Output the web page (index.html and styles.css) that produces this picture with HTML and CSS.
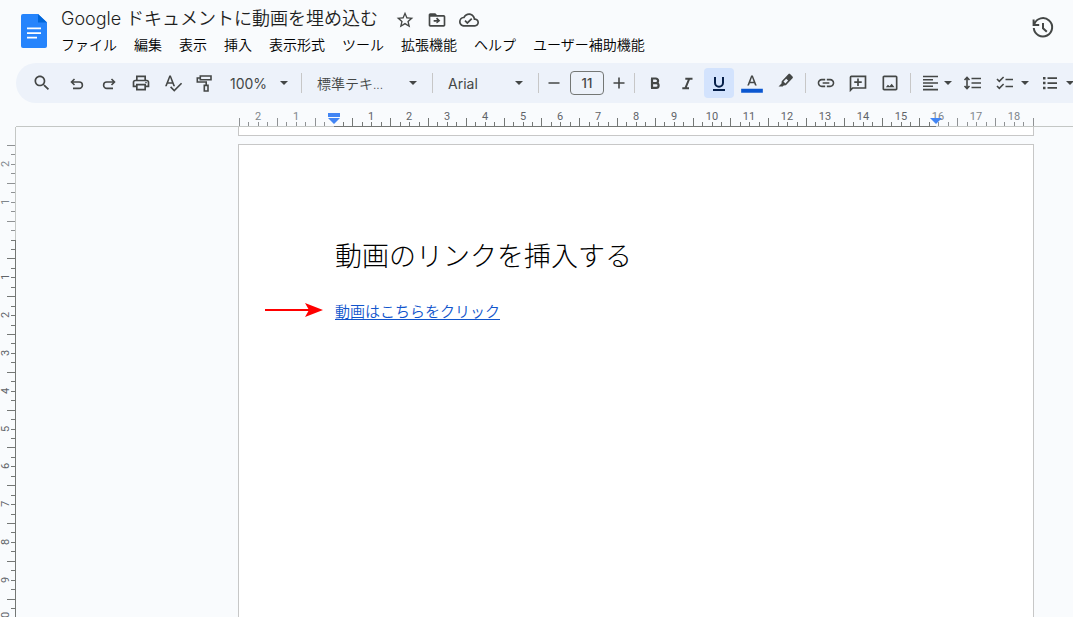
FILE: index.html
```html
<!DOCTYPE html>
<html lang="ja">
<head>
<meta charset="utf-8">
<title>Google ドキュメントに動画を埋め込む</title>
<link rel="stylesheet" href="styles.css">
</head>
<body>
<header class="header">
  <svg class="logo" viewBox="0 0 26 34" aria-hidden="true"><path fill="#2684fc" d="M2 0h15l9 8.500V32a2 2 0 0 1-2 2H2a2 2 0 0 1-2-2V2a2 2 0 0 1 2-2z"/><path fill="#0066da" d="M17 0l9 8.500h-9z"/><path fill="#fff" d="M6 13.500h14v1.700H6zM6 18.300h14V20H6zM6 22.800h10v1.700H6z"/></svg>
  <div class="heading">
    <div class="title-row">
      <h1 class="title"><span class="latin">Google</span> ドキュメントに動画を埋め込む</h1>
      <button class="title-btn" aria-label="スター"><svg viewBox="0 0 24 24"><path d="M22 9.240l-7.190-.62L12 2 9.190 8.630 2 9.240l5.460 4.730L5.820 21 12 17.270 18.180 21l-1.630-7.030L22 9.240zM12 15.400l-3.760 2.270 1-4.280-3.320-2.880 4.380-.38L12 6.100l1.710 4.040 4.380.38-3.320 2.880 1 4.280L12 15.400z"/></svg></button>
      <button class="title-btn" aria-label="移動"><svg viewBox="0 0 24 24"><path d="M20 6h-8l-2-2H4c-1.100 0-2 .9-2 2v12c0 1.100.9 2 2 2h16c1.100 0 2-.9 2-2V8c0-1.100-.9-2-2-2zm0 12H4V8h16v10zm-7.840-2L16 13l-3.840-4-1.400 1.410L12.160 12H8v2h4.160l-1.400 1.590z"/></svg></button>
      <button class="title-btn" aria-label="ドキュメントのステータス"><svg viewBox="0 0 24 24"><path d="M19.350 10.040C18.670 6.590 15.640 4 12 4 9.110 4 6.600 5.640 5.350 8.040 2.340 8.360 0 10.910 0 14c0 3.310 2.690 6 6 6h13c2.760 0 5-2.240 5-5 0-2.640-2.050-4.780-4.650-4.960zM19 18H6c-2.210 0-4-1.790-4-4 0-2.050 1.530-3.760 3.560-3.970l1.070-.11.5-.95C8.080 7.140 9.940 6 12 6c2.620 0 4.880 1.860 5.390 4.430l.3 1.500 1.530.11c1.560.1 2.780 1.410 2.780 2.960 0 1.650-1.350 3-3 3zm-9-3.820l-2.090-2.090L6.500 13.500 10 17l6.010-6.010-1.410-1.410z"/></svg></button>
    </div>
    <nav class="menu" aria-label="メニュー">
      <button>ファイル</button><button>編集</button><button>表示</button><button>挿入</button><button>表示形式</button><button>ツール</button><button>拡張機能</button><button>ヘルプ</button><button>ユーザー補助機能</button>
    </nav>
  </div>
  <button class="history" aria-label="変更履歴"><svg viewBox="0 0 24 24" fill="none" stroke="#444746" stroke-width="2"><path d="M3.300 8.200A9.200 9.200 0 1 1 2.800 12M2.600 3.500V9h5.600M12 7v5.300l3.800 3.500"/></svg></button>
</header>

<div class="toolbar" role="toolbar" aria-label="書式設定">
  <button class="tool search" aria-label="検索"><svg viewBox="0 0 24 24"><path d="M15.500 14h-.79l-.28-.27C15.410 12.590 16 11.110 16 9.500 16 5.910 13.090 3 9.500 3S3 5.910 3 9.500 5.910 16 9.500 16c1.610 0 3.090-.59 4.230-1.570l.27.28v.79l5 4.990L20.490 19l-4.990-5zm-6 0C7.010 14 5 11.990 5 9.500S7.010 5 9.500 5 14 7.010 14 9.500 11.990 14 9.500 14z"/></svg></button>
  <button class="tool" aria-label="元に戻す"><svg viewBox="0 0 20 20" class="line"><path d="M7.500 6L4.500 9l3 3M4.500 9h7.700a3.200 3.200 0 0 1 0 6.400H6"/></svg></button>
  <button class="tool" aria-label="やり直し"><svg viewBox="0 0 20 20" class="line"><path d="M12.500 6l3 3-3 3M15.500 9H7.800a3.200 3.200 0 0 0 0 6.400H14"/></svg></button>
  <button class="tool" aria-label="印刷"><svg viewBox="0 0 24 24"><path d="M19 8h-1V3H6v5H5c-1.660 0-3 1.340-3 3v6h4v4h12v-4h4v-6c0-1.660-1.340-3-3-3zM8 5h8v3H8V5zm8 12v2H8v-4h8v2zm2-2v-2H6v2H4v-4c0-.55.45-1 1-1h14c.55 0 1 .45 1 1v4h-2z"/><circle cx="18" cy="11.500" r="1"/></svg></button>
  <button class="tool" aria-label="スペルチェック"><svg viewBox="0 0 24 24"><path d="M12.450 16h2.090L9.430 3H7.570L2.460 16h2.090l1.120-3h5.640l1.140 3zm-6.020-5L8.500 5.480 10.570 11H6.430zm15.160.59l-8.090 8.090L9.830 16l-1.410 1.410 5.090 5.090L23 13l-1.410-1.410z"/></svg></button>
  <button class="tool" aria-label="書式を貼り付け"><svg viewBox="0 0 20 20" class="line"><path d="M5.300 3h10.700v3.800H5.300zM5.300 5H2.300v4h8.900v3.200M9.300 12.400h3.700V18H9.300z"/></svg></button>
  <button class="drop zoom"><span>100%</span><i class="caret"></i></button>
  <span class="rule"></span>
  <button class="drop style"><span>標準テキ...</span><i class="caret"></i></button>
  <span class="rule"></span>
  <button class="drop font"><span>Arial</span><i class="caret"></i></button>
  <span class="rule"></span>
  <button class="step" aria-label="縮小"><svg viewBox="0 0 20 20" class="line"><path d="M4.500 10h11"/></svg></button>
  <input class="size" type="text" value="11" aria-label="フォントサイズ">
  <button class="step" aria-label="拡大"><svg viewBox="0 0 20 20" class="line"><path d="M4.500 10h11M10 4.500v11"/></svg></button>
  <span class="rule"></span>
  <button class="tool" aria-label="太字"><svg viewBox="0 0 20 20" fill="none" stroke="#444746" stroke-width="2.200"><path d="M7 5.800v9M6 5.500h4.800a2.200 2.200 0 0 1 0 4.600H7M7 10.100h4.200a2.300 2.300 0 0 1 0 4.800H6"/></svg></button>
  <button class="tool" aria-label="斜体"><svg viewBox="0 0 20 20" fill="none" stroke="#444746" stroke-width="2"><path d="M8.300 5.800H15.500M5.300 15.300H12M12.200 5.800L8.300 15.300"/></svg></button>
  <button class="tool active" aria-label="下線" aria-pressed="true"><svg viewBox="0 0 20 20" fill="none" stroke="#041e49" stroke-width="2"><path d="M6 4v5.800a4 4 0 0 0 8 0V4M4 17h12"/></svg></button>
  <button class="tool color" aria-label="テキストの色"><svg viewBox="0 0 24 24"><path d="M11 3L6.300 15h2.100l1-2.700h5.200l1 2.700h2.100L13 3h-2zm-.9 7.400L12 5.200l1.900 5.200z"/><path fill="#0b57d0" d="M-1 19h26v4.800H-1z"/></svg></button>
  <button class="tool" aria-label="ハイライトの色"><svg viewBox="0 0 20 20"><path fill-rule="evenodd" d="M13.300 1.200c.6-.5 1.400-.5 2 0l2.200 2.200c.5.600.5 1.400 0 1.900l-6.600 7-2.200.3-1 1H3.500l3-3.100.2-2.200zM8.500 8.600l1.900 1.900 2.700-2.900-1.900-1.900z"/></svg></button>
  <span class="rule"></span>
  <button class="tool" aria-label="リンクを挿入"><svg viewBox="0 0 24 24"><path d="M3.900 12c0-1.710 1.390-3.100 3.100-3.100h4V7H7c-2.760 0-5 2.240-5 5s2.240 5 5 5h4v-1.900H7c-1.710 0-3.100-1.390-3.100-3.100zM8 13h8v-2H8v2zm9-6h-4v1.900h4c1.710 0 3.100 1.390 3.100 3.100s-1.390 3.100-3.100 3.100h-4V17h4c2.760 0 5-2.240 5-5s-2.240-5-5-5z"/></svg></button>
  <button class="tool" aria-label="コメントを追加"><svg viewBox="0 0 24 24"><path d="M22 3H4a2 2 0 0 0-2 2v18l4-4h16V3zM20 17H5.200L4 18.200V5h16zM11 6.500h2V10h3.500v2H13v3.500h-2V12H7.500v-2H11z"/></svg></button>
  <button class="tool" aria-label="画像を挿入"><svg viewBox="0 0 24 24"><path d="M19 5v14H5V5h14m0-2H5c-1.100 0-2 .9-2 2v14c0 1.100.9 2 2 2h14c1.100 0 2-.9 2-2V5c0-1.100-.9-2-2-2zm-5 10l-2.500 3-2-2L7 17h10.500z"/></svg></button>
  <span class="rule"></span>
  <button class="tool wide" aria-label="配置"><svg viewBox="0 0 20 20" class="line"><path d="M2 3.500h15M2 6.800h10M2 10h15M2 13.300h10M2 16.600h15"/></svg><i class="caret"></i></button>
  <button class="tool" aria-label="行間隔"><svg viewBox="0 0 20 20" class="line"><path d="M8.500 5.500H18M8.500 10H18M8.500 14.500H18M4 4.500v11M1.500 7L4 4.500 6.500 7M1.500 13L4 15.500 6.500 13"/></svg></button>
  <button class="tool wide list" aria-label="チェックリスト"><svg viewBox="0 0 20 20" class="line"><path d="M10.500 6.500H18M10.500 13.500H18M2 6l2.300 2.300L8.600 4M2 13l2.300 2.300L8.600 11"/></svg><i class="caret"></i></button>
  <button class="tool wide list" aria-label="箇条書き"><svg viewBox="0 0 20 20"><path d="M7.500 4.300H17V6H7.500zM7.500 9.200H17v1.700H7.500zM7.500 14.100H17v1.700H7.500zM3 3.900h2.500v2.500H3zM3 8.800h2.500v2.500H3zM3 13.700h2.500v2.500H3z"/></svg><i class="caret"></i></button>
</div>

<div class="workspace">
  <svg class="ruler-h" id="ruler-h" aria-hidden="true"></svg>
  <svg class="ruler-v" id="ruler-v" aria-hidden="true"></svg>
  <main class="canvas">
    <div class="page previous"></div>
    <article class="page current">
      <h2 class="doc-title">動画のリンクを挿入する</h2>
      <p class="doc-text">
        <svg class="arrow" viewBox="0 0 58 16" aria-hidden="true"><path d="M0 7h44v2H0z"/><path d="M40 1l18 7-18 7 4-7z"/></svg>
        <a href="#video">動画はこちらをクリック</a>
      </p>
    </article>
  </main>
</div>
<script src="ruler.js"></script>
</body>
</html>
```

FILE: styles.css
```css
* { box-sizing: border-box; }
body {
  margin: 0;
  height: 100vh;
  display: flex;
  flex-direction: column;
  overflow: hidden;
  background: #f9fbfd;
  color: #1f1f1f;
  font-family: "Open Sans", "Noto Sans CJK JP", sans-serif;
}
button {
  border: 0;
  padding: 0;
  background: none;
  color: inherit;
  font: inherit;
  flex: none;
}
svg { display: block; fill: #444746; flex: none; }
.line { fill: none; stroke: #444746; stroke-width: 1.6; }

.header { display: flex; align-items: flex-start; height: 63px; padding: 0 18px 0 21px; flex: none; }
.logo { width: 26px; height: 34px; margin-top: 14px; }
.heading { flex: 1; padding: 6px 0 0 14px; }
.title-row { display: flex; align-items: center; height: 27px; gap: 12px; }
.title {
  margin: 0 5px 0 0;
  padding-bottom: 2px;
  font-family: Lato, "Noto Sans CJK JP", sans-serif;
  font-size: 18px;
  line-height: 24px;
  font-weight: 350;
  white-space: nowrap;
}
.latin { font-family: Inter, sans-serif; }
.title-btn svg { width: 20px; height: 20px; }
.menu { display: flex; gap: 17px; font-size: 14px; line-height: 24px; font-weight: 350; color: #000; white-space: nowrap; }
.history { margin-top: 16px; }
.history svg { width: 24px; height: 24px; fill: none; }

.toolbar {
  display: flex;
  align-items: center;
  gap: 2px;
  flex: none;
  height: 40px;
  margin-left: 16px;
  padding-left: 11px;
  border-radius: 20px 0 0 20px;
  background: #edf2fa;
  color: #444746;
  overflow: hidden;
}
.tool { display: flex; align-items: center; justify-content: center; width: 30px; height: 30px; border-radius: 4px; }
.tool svg { width: 20px; height: 20px; }
.search { margin-right: 3px; }
.active { background: #d3e3fd; }
.tool svg[fill="none"] { fill: none; }
.color { width: 32px; }
.color svg { overflow: visible; }
.wide { width: 40px; gap: 3px; }
.list { width: 43px; gap: 6px; }
.rule { width: 1px; height: 20px; margin: 0 3px; background: #c7c7c7; flex: none; }
.drop { display: flex; align-items: center; justify-content: space-between; height: 30px; padding: 0 10px; font-size: 14px; white-space: nowrap; }
.zoom { width: 74px; padding: 0 8px; font-family: Inter, sans-serif; }
.style { width: 120px; font-weight: 350; }
.font { width: 95px; font-family: Inter, sans-serif; }
.caret { border: 4px solid transparent; border-top-color: #444746; border-bottom: 0; flex: none; }
.step svg { width: 20px; height: 20px; }
.size {
  width: 34px;
  height: 24px;
  margin: 0 3px 0 4px;
  padding: 0;
  border: 1px solid #747775;
  border-radius: 4px;
  background: transparent;
  color: #444746;
  font: 500 13px Inter, sans-serif;
  text-align: center;
  flex: none;
}

.workspace { flex: 1; min-height: 0; display: grid; grid-template: 24px 1fr / 16px 1fr; }
.ruler-h { grid-area: 1 / 2; width: 100%; height: 24px; }
.ruler-v { grid-area: 2 / 1; width: 16px; height: 100%; }
.ruler-h text, .ruler-v text { font: 11px Roboto, sans-serif; text-anchor: middle; fill: #5f6368; }
.ruler-h .outer, .ruler-v .outer { fill: #80868b; }
.ruler-h .marker { fill: #4285f4; }
.canvas { grid-area: 2 / 2; overflow: hidden; padding-left: 222px; }
.page { max-width: 796px; background: #fff; border: 1px solid #c7c7c7; }
.previous { height: 9px; border-top: 0; margin-bottom: 8px; }
.current { height: 1123px; padding: 91px 96px; }
.doc-title { margin: 0; font-size: 27px; line-height: 40px; font-weight: 300; color: #000; }
.doc-text { position: relative; margin: 22px 0 0; font-size: 15px; line-height: 26px; font-weight: 350; }
.doc-text a { color: #1155cc; text-underline-offset: 2px; }
.arrow { position: absolute; left: -70px; top: 4px; width: 58px; height: 16px; fill: #f00; }
```

FILE: ruler.js
```
const CM = 37.8;
const NS = "http://www.w3.org/2000/svg";

function add(svg, name, attrs, text) {
  const el = document.createElementNS(NS, name);
  for (const key in attrs) el.setAttribute(key, attrs[key]);
  if (text) el.textContent = text;
  svg.appendChild(el);
}

function drawRuler(svg, opts) {
  const { origin, from, to, activeEnd, vertical, edge } = opts;
  const bar = (pos, length, start, thick, color) => add(svg, "rect", vertical
    ? { x: start, y: pos, width: thick, height: length, fill: color }
    : { x: pos, y: start, width: length, height: thick, fill: color });
  bar(vertical ? 0 : -1, 3000, edge, 1, "#c4c7c5");
  bar(origin, activeEnd - origin, edge, 1, "#747775");
  for (let q = from; q <= to; q++) {
    const pos = Math.floor(origin + q * CM / 4);
    const major = Math.abs(q % 4) === 2;
    const size = major ? 8 : 4;
    if (q !== 0 || vertical) bar(pos, 1, edge - size, size, pos < origin || pos > activeEnd ? "#8f9294" : "#747775");
    if (q % 4 === 0 && q !== 0) {
      const cls = pos < origin || pos > activeEnd ? "outer" : "";
      add(svg, "text", vertical
        ? { class: cls, transform: `translate(9 ${pos}) rotate(-90)` }
        : { class: cls, x: pos, y: 17 }, String(Math.abs(q / 4)));
    }
  }
}

const horizontal = document.getElementById("ruler-h");
drawRuler(horizontal, { origin: 318, from: -10, to: 74, activeEnd: 920, edge: 23 });
add(horizontal, "path", { class: "marker", d: "M312 10h12v4h-12zM312 15h12l-6 6z" });
add(horizontal, "path", { class: "marker", d: "M914 15h12l-6 6z" });
const vertical = document.getElementById("ruler-v");
const quarters = Math.ceil((vertical.clientHeight - 113) / CM * 4);
drawRuler(vertical, { origin: 113, from: -10, to: quarters, activeEnd: 3000, vertical: true, edge: 15 });
```
